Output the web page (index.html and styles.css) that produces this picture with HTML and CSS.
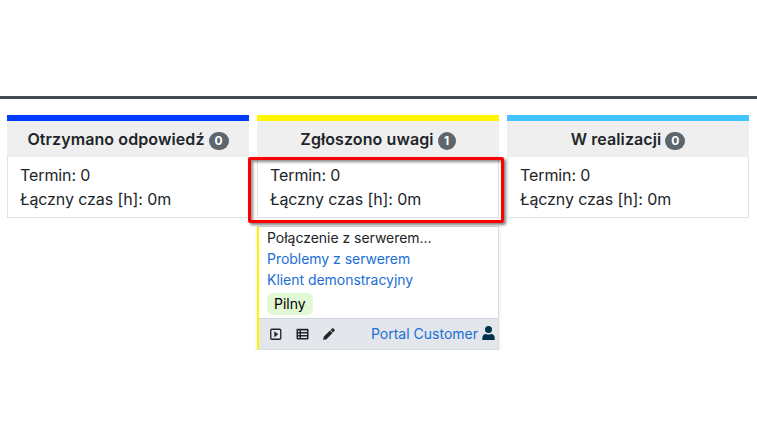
FILE: index.html
```
<!DOCTYPE html>
<html lang="pl">
<head>
<meta charset="utf-8">
<title>Kanban</title>
<link rel="stylesheet" href="styles.css">
</head>
<body>
<header class="topbar"></header>
<main class="board">
  <section class="column column-blue">
    <h2 class="column-title"><span>Otrzymano odpowiedź</span><span class="count">0</span></h2>
    <div class="summary"><div>Termin: 0</div><div>Łączny czas [h]: 0m</div></div>
  </section>
  <section class="column column-yellow">
    <h2 class="column-title"><span>Zgłoszono uwagi</span><span class="count round">1</span></h2>
    <div class="summary"><div>Termin: 0</div><div>Łączny czas [h]: 0m</div><div class="highlight"></div></div>
    <article class="card">
      <div class="card-body">
        <div>Połączenie z serwerem...</div>
        <a>Problemy z serwerem</a>
        <a>Klient demonstracyjny</a>
        <span class="tag">Pilny</span>
      </div>
      <footer class="card-footer">
        <svg class="icon" viewBox="0 0 12 12"><rect x=".75" y="1.250" width="10" height="10" rx="1" fill="none" stroke="currentColor" stroke-width="1.3"/><path d="M4.300 3.300v6L8.200 6.300z" fill="currentColor"/></svg>
        <svg class="icon icon-list" viewBox="0 0 13 12"><path fill="currentColor" fill-rule="evenodd" d="M1.500.8h10q1 0 1 1v8.700q0 1-1 1h-10q-1 0-1-1V1.800q0-1 1-1zM2 2.500v1.400h1.500V2.500zm3 0v1.400h6V2.500zM2 5.500v1.400h1.500V5.500zm3 0v1.400h6V5.500zM2 8.500v1.400h1.500V8.500zm3 0v1.400h6V8.500z"/></svg>
        <svg class="icon icon-pen" viewBox="0 0 12 12"><path fill="currentColor" d="M.1 12l.8-3.500L7 2.400 9.600 5l-6.100 6.200zM7.600 1.900L9 .6q.8-.7 1.600 0l.8.8q.7.800 0 1.600l-1.300 1.400z"/></svg>
        <a class="person">Portal Customer</a>
        <svg class="user" viewBox="0 0 13 14"><circle cx="6.500" cy="3.600" r="3.500" fill="currentColor"/><path fill="currentColor" d="M.3 14v-1.800Q.3 8.400 4 8.100q2.500 1 5 0 3.700.3 3.700 4.100V14z"/></svg>
      </footer>
    </article>
  </section>
  <section class="column column-sky">
    <h2 class="column-title"><span>W realizacji</span><span class="count">0</span></h2>
    <div class="summary"><div>Termin: 0</div><div>Łączny czas [h]: 0m</div></div>
  </section>
</main>
</body>
</html>
```
FILE: styles.css
```
* { box-sizing: border-box; }
body {
  margin: 0;
  background: #fff;
  color: #212529;
  font: 16px/24px Inter, "Liberation Sans", sans-serif;
  overflow: hidden;
}
.topbar { height: 99px; border-bottom: 3px solid #414b55; }
.board {
  display: grid;
  grid-template-columns: repeat(3, 242px);
  gap: 8px;
  padding: 16px 7px 0;
  align-items: start;
}
.column { border-top: 6px solid; }
.column-blue { border-color: #0039ff; }
.column-yellow { border-color: #fff500; }
.column-sky { border-color: #42c5ff; }
.column-title {
  display: flex;
  align-items: center;
  justify-content: center;
  gap: 4px;
  height: 36px;
  margin: 0;
  background: #efefef;
  font-size: 16px;
  font-weight: 600;
  letter-spacing: .1px;
}
.count {
  width: 20px;
  height: 18px;
  margin-top: 3px;
  border-radius: 9px;
  background: #5e666d;
  color: #fff;
  font-size: 12px;
  font-weight: 700;
  letter-spacing: 0;
  line-height: 18px;
  text-align: center;
}
.round { width: 18px; }
.summary {
  position: relative;
  height: 61px;
  padding: 6px 12px;
  border: 1px solid #dee2e6;
  border-top: 0;
  letter-spacing: -.1px;
}
.highlight {
  position: absolute;
  top: 0;
  left: -10px;
  width: 256px;
  height: 66px;
  border: 3px solid #f00;
  border-radius: 2px;
  box-shadow: 2px 2px 3px rgba(0, 0, 0, .5), inset 2px 2px 3px rgba(0, 0, 0, .45);
}
.card {
  margin-top: 8px;
  height: 124px;
  border: 1px solid #d9dce2;
  border-left: 2px solid #fff500;
  box-shadow: 0 2px 4px rgba(0, 0, 0, .1);
  font-size: 14px;
  line-height: 21px;
}
.card-body {
  display: flex;
  flex-direction: column;
  align-items: flex-start;
  height: 91px;
  padding: 0 8px;
  letter-spacing: -.03px;
}
a { color: #1a6fd6; }
.tag {
  height: 22px;
  margin-top: 3px;
  padding: 0 7px;
  border-radius: 6px;
  background: #e2f8d5;
  color: #000;
  line-height: 22px;
}
.card-footer {
  display: flex;
  align-items: center;
  height: 31px;
  padding: 0 3px 0 11px;
  border-top: 1px solid #d2d3df;
  background: #e3e6eb;
}
.icon { width: 12px; height: 12px; }
.icon-list { width: 13px; margin-left: 14px; }
.icon-pen { margin-left: 14px; }
.person { margin: -2px 0 0 auto; }
.user { width: 13px; height: 14px; margin: 0 0 3px 4px; color: #003349; }
```
